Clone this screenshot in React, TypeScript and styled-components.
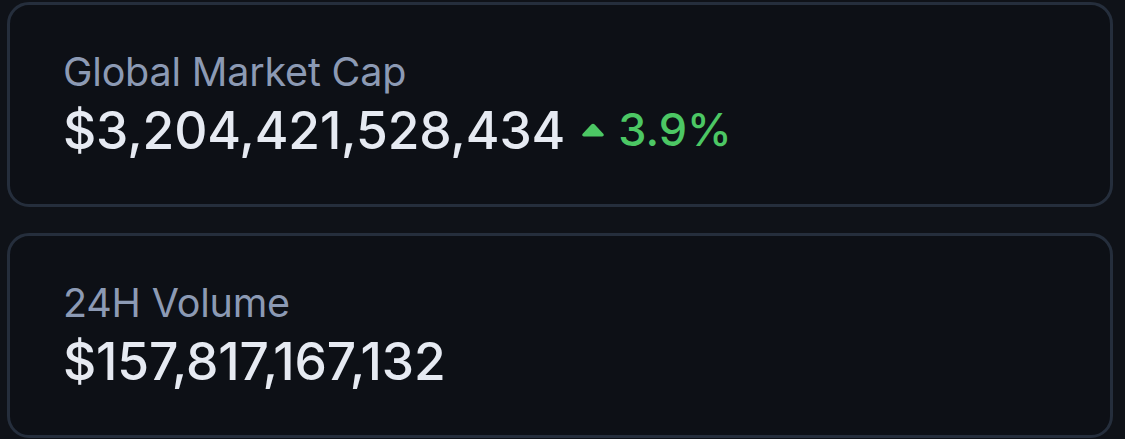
import React from "react";
import styled, {createGlobalStyle} from "styled-components";

const Global = createGlobalStyle`
  html, body {
    margin: 0;
    padding: 0;
    background: #0f1218;
  }
  body {
    font-family: Inter, "Noto Sans", sans-serif;
  }
`;

const Page = styled.div`
  display: flex;
  flex-direction: column;
  gap: 26px;
  padding: 2px 12px 0 7px;
  width: 1125px;
  box-sizing: border-box;
`;

const Card = styled.div`
  box-sizing: border-box;
  height: 205px;
  border: 3px solid #252e3c;
  border-radius: 22px;
  background: #0d1016;
  display: flex;
  flex-direction: column;
  justify-content: center;
  padding: 0 0 2px 53px;
  gap: 6px;
`;

const Label = styled.div`
  color: #8c9ab4;
  font-size: 39.5px;
  line-height: 46px;
  letter-spacing: -0.2px;
`;

const ValueRow = styled.div`
  display: flex;
  align-items: center;
  gap: 16px;
`;

const Value = styled.div`
  color: #e6eaf2;
  font-size: 51.5px;
  line-height: 58px;
  font-weight: 500;
  letter-spacing: -0.15px;
`;

const Change = styled.div<{ $up: boolean }>`
  display: flex;
  align-items: center;
  gap: 13px;
  color: ${p => (p.$up ? "#4cc764" : "#e5534b")};
  font-size: 45px;
  line-height: 58px;
  font-weight: 500;
`;

const Caret = () => (
    <svg width="24" height="14" viewBox="0 0 24 14">
        <path d="M10.3 1.6a2.3 2.3 0 0 1 3.4 0l8.6 9.2c1 1.1.3 2.6-1.2 2.6H2.9c-1.5 0-2.2-1.5-1.2-2.6z" fill="currentColor"/>
    </svg>
);

interface StatProps {
    label: string
    value: string
    change?: string
}

const Stat = (props: StatProps) => (
    <Card>
        <Label>{props.label}</Label>
        <ValueRow>
            <Value>{props.value}</Value>
            {props.change && (
                <Change $up={true}>
                    <Caret/>
                    {props.change}
                </Change>
            )}
        </ValueRow>
    </Card>
);

export default function App() {
    return (
        <>
            <Global/>
            <Page>
                <Stat label="Global Market Cap" value="$3,204,421,528,434" change="3.9%"/>
                <Stat label="24H Volume" value="$157,817,167,132"/>
            </Page>
        </>
    );
}
